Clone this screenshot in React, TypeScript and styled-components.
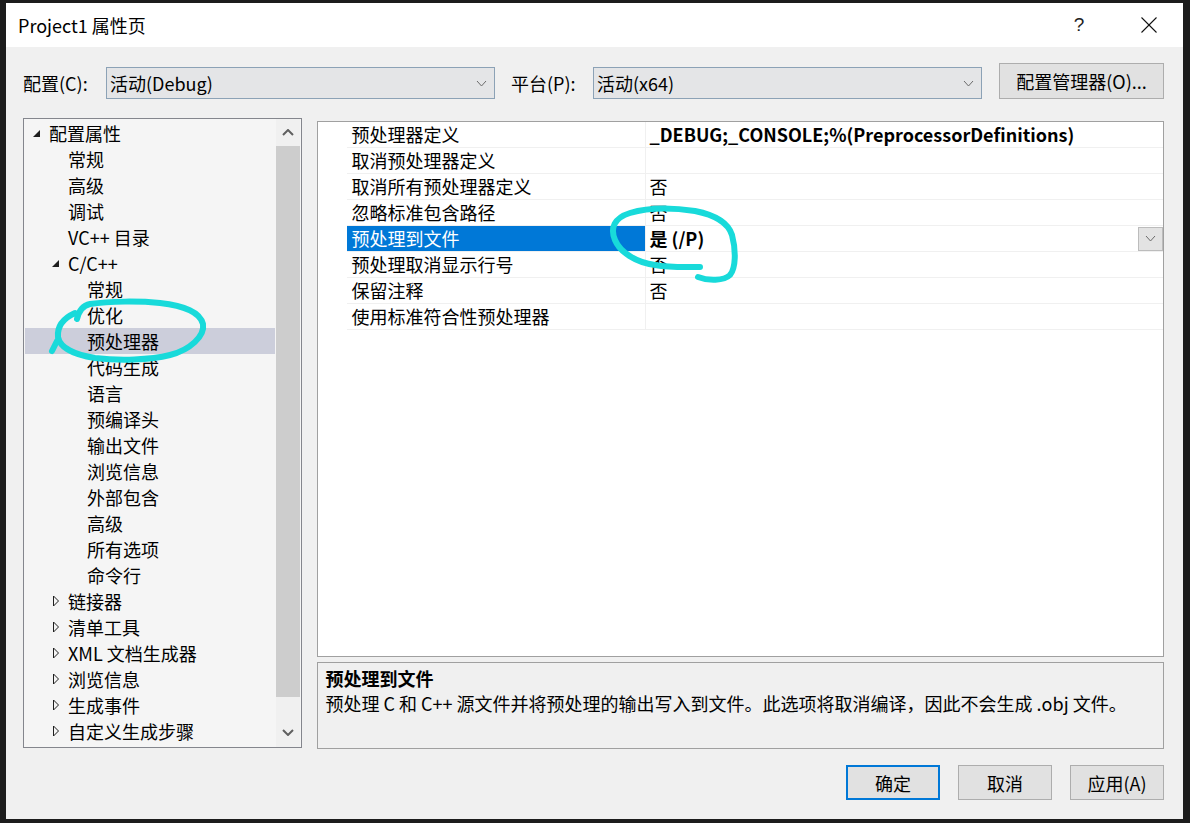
import React from "react";
import styled, { createGlobalStyle } from "styled-components";

const GlobalStyle = createGlobalStyle`
  html, body { margin: 0; padding: 0; background: #1c1c1c; }
  body { font-family: "Noto Sans CJK SC", "Noto Sans", sans-serif; }
  #root { width: 1190px; height: 823px; position: relative; overflow: hidden; }
  * { box-sizing: border-box; }
`;

const Screen = styled.div`
  width: 1190px;
  height: 823px;
  padding: 3px 7px 4px 6px;
  background: #1c1c1c;
  position: relative;
`;

const Dialog = styled.div`
  width: 100%;
  height: 100%;
  background: #f0f0f0;
  display: flex;
  flex-direction: column;
  color: #000;
  font-size: 18px;
`;

const TitleBar = styled.div`
  height: 44px;
  flex-shrink: 0;
  background: #fff;
  display: flex;
  align-items: center;
  padding-left: 12px;
`;

const Title = styled.div`
  flex: 1;
  font-size: 18px;
  line-height: 24px;
  color: #000;
`;

const HelpButton = styled.div`
  width: 46px;
  margin-right: 17px;
  text-align: center;
  font-size: 19px;
  line-height: 24px;
  font-family: "Liberation Sans", sans-serif;
  color: #222;
`;

const CloseButton = styled.div`
  width: 60px;
  margin-right: 4px;
  display: flex;
  justify-content: center;
  align-items: center;
`;

const Body = styled.div`
  flex: 1;
  display: flex;
  flex-direction: column;
  padding: 0 19px 0 17px;
`;

const ConfigRow = styled.div`
  margin-top: 16px;
  height: 36px;
  display: flex;
  align-items: flex-end;
`;

const FieldLabel = styled.div<{ $width: number }>`
  width: ${(p) => p.$width}px;
  height: 32px;
  line-height: 32px;
  font-size: 18px;
  white-space: nowrap;
`;

const Combo = styled.div`
  width: 389px;
  height: 32px;
  border: 1px solid #8ca2b6;
  background: #e4e5e7;
  display: flex;
  align-items: center;
  padding: 0 7px 0 3px;
  font-size: 18px;
`;

const ComboText = styled.div`
  flex: 1;
  line-height: 30px;
  white-space: nowrap;
`;

const PlatformLabel = styled(FieldLabel)`
  margin-left: 16px;
`;

const PushButton = styled.div<{ $width: number; $default?: boolean }>`
  width: ${(p) => p.$width}px;
  height: ${(p) => (p.$default ? 35 : 35)}px;
  background: #e1e1e1;
  border: ${(p) => (p.$default ? "2px solid #0078d7" : "1px solid #adadad")};
  display: flex;
  align-items: center;
  justify-content: center;
  font-size: 18px;
  line-height: 24px;
  white-space: nowrap;
`;

const ManagerButton = styled(PushButton)`
  height: 36px;
  margin-left: 17px;
`;

const Main = styled.div`
  margin-top: 19px;
  display: flex;
  gap: 15px;
  align-items: flex-start;
`;

const TreeBox = styled.div`
  width: 279px;
  height: 630px;
  border: 1px solid #84868d;
  background: #f5f5f5;
  display: flex;
`;

const TreeList = styled.div`
  flex: 1;
  padding-top: 1px;
  overflow: hidden;
`;

const TreeRow = styled.div<{ $level: number; $selected?: boolean }>`
  height: 26px;
  margin: 0 1px;
  display: flex;
  align-items: center;
  padding-left: ${(p) => 2 + p.$level * 19}px;
  background: ${(p) => (p.$selected ? "#cccedb" : "transparent")};
  font-size: 18px;
  line-height: 26px;
  white-space: nowrap;
`;

const Expander = styled.div`
  width: 19px;
  height: 26px;
  margin-right: 3px;
  display: flex;
  align-items: center;
  justify-content: center;
`;

const ScrollBar = styled.div`
  width: 24px;
  margin-right: 1px;
  background: #f0f0f0;
  display: flex;
  flex-direction: column;
`;

const ScrollArrow = styled.div<{ $height?: number; $grow?: boolean }>`
  height: ${(p) => (p.$height ? `${p.$height}px` : "auto")};
  flex: ${(p) => (p.$grow ? 1 : "none")};
  display: flex;
  align-items: ${(p) => (p.$grow ? "flex-end" : "center")};
  justify-content: center;
  padding-bottom: ${(p) => (p.$grow ? "11px" : "0")};
`;

const ScrollThumb = styled.div`
  height: 551px;
  background: #cdcdcd;
`;

const RightColumn = styled.div`
  margin-top: 3px;
  width: 849px;
  display: flex;
  flex-direction: column;
  gap: 5px;
`;

const GridBox = styled.div`
  height: 536px;
  border: 1px solid #a0a0a0;
  background: #fff;
  display: flex;
`;

const Gutter = styled.div`
  width: 29px;
  background: #fff;
`;

const GridRows = styled.div`
  flex: 1;
  display: flex;
  flex-direction: column;
`;

const PropRow = styled.div`
  height: 26px;
  display: flex;
  border-bottom: 1px solid #f0f0f0;
`;

const NameCell = styled.div<{ $selected?: boolean }>`
  width: 299px;
  border-right: 1px solid #f0f0f0;
  padding-left: 5px;
  background: ${(p) => (p.$selected ? "#0078d7" : "transparent")};
  color: ${(p) => (p.$selected ? "#fff" : "#000")};
  font-size: 18px;
  line-height: 25px;
  white-space: nowrap;
`;

const ValueCell = styled.div<{ $bold?: boolean }>`
  flex: 1;
  display: flex;
  align-items: center;
  padding-left: 4px;
  font-size: 18px;
  line-height: 25px;
  font-weight: ${(p) => (p.$bold ? 700 : 400)};
  white-space: nowrap;
`;

const ValueText = styled.div`
  flex: 1;
`;

const DropButton = styled.div`
  width: 25px;
  height: 24px;
  background: #e3e3e3;
  border: 1px solid #bcbcbc;
  display: flex;
  align-items: center;
  justify-content: center;
`;

const DescBox = styled.div`
  height: 87px;
  border: 1px solid #a0a0a0;
  background: #f0f0f0;
  padding: 3px 8px;
`;

const DescTitle = styled.div`
  font-size: 18px;
  font-weight: 700;
  line-height: 25px;
`;

const DescText = styled.div`
  font-size: 18px;
  line-height: 25px;
  white-space: nowrap;
`;

const ButtonRow = styled.div`
  margin-top: 16px;
  display: flex;
  justify-content: flex-end;
  gap: 18px;
`;

const Overlay = styled.svg`
  position: absolute;
  left: 0;
  top: 0;
  width: 1190px;
  height: 823px;
  pointer-events: none;
`;

const ChevronDown = ({ color = "#6b6b6b", w = 10, h = 6, sw = 1 }: { color?: string; w?: number; h?: number; sw?: number }) => (
  <svg width={w + 2} height={h + 2} viewBox={`0 0 ${w + 2} ${h + 2}`}>
    <polyline points={`1,1 ${w / 2 + 1},${h + 1} ${w + 1},1`} fill="none" stroke={color} strokeWidth={sw} />
  </svg>
);

const ChevronUp = ({ color = "#606060", w = 10, h = 6, sw = 2 }: { color?: string; w?: number; h?: number; sw?: number }) => (
  <svg width={w + 2} height={h + 2} viewBox={`0 0 ${w + 2} ${h + 2}`}>
    <polyline points={`1,${h + 1} ${w / 2 + 1},1 ${w + 1},${h + 1}`} fill="none" stroke={color} strokeWidth={sw} />
  </svg>
);

const ExpandedTri = () => (
  <svg width="9" height="9" viewBox="0 0 9 9">
    <polygon points="8,1 8,8 1,8" fill="#1e1e1e" />
  </svg>
);

const CollapsedTri = () => (
  <svg width="8" height="12" viewBox="0 0 8 12">
    <polygon points="1.5,1 6.5,6 1.5,11" fill="none" stroke="#1e1e1e" strokeWidth="1" />
  </svg>
);

type TreeItem = { label: string; level: number; state?: "open" | "closed"; selected?: boolean };

const treeItems: TreeItem[] = [
  { label: "配置属性", level: 0, state: "open" },
  { label: "常规", level: 1 },
  { label: "高级", level: 1 },
  { label: "调试", level: 1 },
  { label: "VC++ 目录", level: 1 },
  { label: "C/C++", level: 1, state: "open" },
  { label: "常规", level: 2 },
  { label: "优化", level: 2 },
  { label: "预处理器", level: 2, selected: true },
  { label: "代码生成", level: 2 },
  { label: "语言", level: 2 },
  { label: "预编译头", level: 2 },
  { label: "输出文件", level: 2 },
  { label: "浏览信息", level: 2 },
  { label: "外部包含", level: 2 },
  { label: "高级", level: 2 },
  { label: "所有选项", level: 2 },
  { label: "命令行", level: 2 },
  { label: "链接器", level: 1, state: "closed" },
  { label: "清单工具", level: 1, state: "closed" },
  { label: "XML 文档生成器", level: 1, state: "closed" },
  { label: "浏览信息", level: 1, state: "closed" },
  { label: "生成事件", level: 1, state: "closed" },
  { label: "自定义生成步骤", level: 1, state: "closed" },
];

type Prop = { name: string; value: string; bold?: boolean; selected?: boolean };

const props: Prop[] = [
  { name: "预处理器定义", value: "_DEBUG;_CONSOLE;%(PreprocessorDefinitions)", bold: true },
  { name: "取消预处理器定义", value: "" },
  { name: "取消所有预处理器定义", value: "否" },
  { name: "忽略标准包含路径", value: "否" },
  { name: "预处理到文件", value: "是 (/P)", bold: true, selected: true },
  { name: "预处理取消显示行号", value: "否" },
  { name: "保留注释", value: "否" },
  { name: "使用标准符合性预处理器", value: "" },
];

export default function App() {
  return (
    <>
      <GlobalStyle />
      <Screen>
        <Dialog>
          <TitleBar>
            <Title>Project1 属性页</Title>
            <HelpButton>?</HelpButton>
            <CloseButton>
              <svg width="16" height="16" viewBox="0 0 16 16">
                <line x1="0.5" y1="0.5" x2="15.5" y2="15.5" stroke="#111" strokeWidth="1.1" />
                <line x1="15.5" y1="0.5" x2="0.5" y2="15.5" stroke="#111" strokeWidth="1.1" />
              </svg>
            </CloseButton>
          </TitleBar>
          <Body>
            <ConfigRow>
              <FieldLabel $width={83}>配置(C):</FieldLabel>
              <Combo>
                <ComboText>活动(Debug)</ComboText>
                <ChevronDown w={9} h={5} />
              </Combo>
              <PlatformLabel $width={82}>平台(P):</PlatformLabel>
              <Combo>
                <ComboText>活动(x64)</ComboText>
                <ChevronDown w={9} h={5} />
              </Combo>
              <ManagerButton $width={165}>配置管理器(O)...</ManagerButton>
            </ConfigRow>
            <Main>
              <TreeBox>
                <TreeList>
                  {treeItems.map((t, i) => (
                    <TreeRow key={i} $level={t.level} $selected={t.selected}>
                      <Expander>
                        {t.state === "open" && <ExpandedTri />}
                        {t.state === "closed" && <CollapsedTri />}
                      </Expander>
                      {t.label}
                    </TreeRow>
                  ))}
                </TreeList>
                <ScrollBar>
                  <ScrollArrow $height={27}>
                    <ChevronUp w={10} h={5} sw={2} />
                  </ScrollArrow>
                  <ScrollThumb />
                  <ScrollArrow $grow>
                    <ChevronDown color="#606060" w={10} h={5} sw={2} />
                  </ScrollArrow>
                </ScrollBar>
              </TreeBox>
              <RightColumn>
                <GridBox>
                  <Gutter />
                  <GridRows>
                    {props.map((p, i) => (
                      <PropRow key={i}>
                        <NameCell $selected={p.selected}>{p.name}</NameCell>
                        <ValueCell $bold={p.bold}>
                          <ValueText>{p.value}</ValueText>
                          {p.selected && (
                            <DropButton>
                              <ChevronDown color="#6b6b6b" w={9} h={5} />
                            </DropButton>
                          )}
                        </ValueCell>
                      </PropRow>
                    ))}
                  </GridRows>
                </GridBox>
                <DescBox>
                  <DescTitle>预处理到文件</DescTitle>
                  <DescText>预处理 C 和 C++ 源文件并将预处理的输出写入到文件。此选项将取消编译，因此不会生成 .obj 文件。</DescText>
                </DescBox>
              </RightColumn>
            </Main>
            <ButtonRow>
              <PushButton $width={94} $default>确定</PushButton>
              <PushButton $width={94}>取消</PushButton>
              <PushButton $width={94}>应用(A)</PushButton>
            </ButtonRow>
          </Body>
        </Dialog>
        <Overlay viewBox="0 0 1190 823">
          <g fill="none" stroke="#18dada" strokeWidth="6" strokeLinecap="round" strokeLinejoin="round">
            <path d="M77 319 Q80 306 90 304 C110 301 140 301 160 303 C185 306 200 312 203 324 C205 336 190 350 170 355 C150 360 120 361 95 358 C75 355 60 348 58 337 C57 326 64 318 75 313" />
            <path d="M57 341 L52 351" />
            <path d="M700 267 C688 267 672 268 655 265 C635 262 620 252 615 240 C610 228 614 218 630 213 C650 207 675 208 695 211 C715 215 728 222 732 235 C736 250 736 268 730 275 C724 281 708 281 698 277" />
          </g>
        </Overlay>
      </Screen>
    </>
  );
}
